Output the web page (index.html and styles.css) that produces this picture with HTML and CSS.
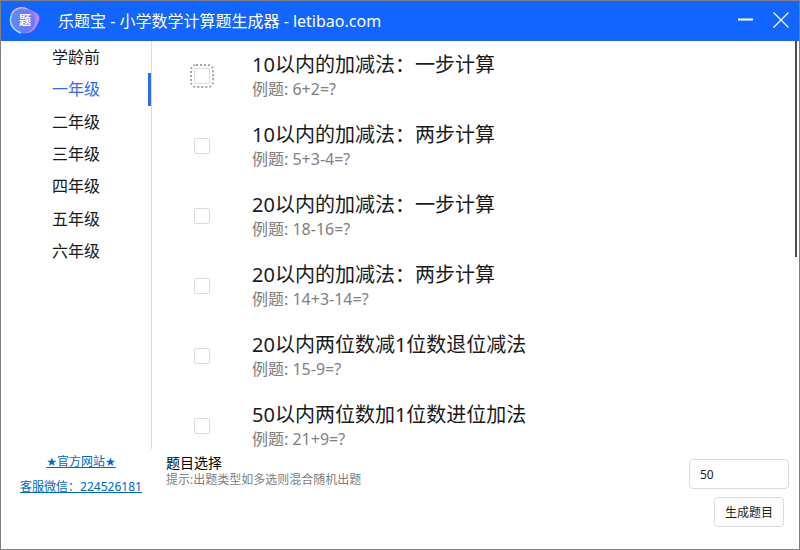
FILE: index.html
```html
<!DOCTYPE html>
<html lang="zh-CN">
<head>
<meta charset="utf-8">
<title>乐题宝 - 小学数学计算题生成器 - letibao.com</title>
<link rel="stylesheet" href="styles.css">
</head>
<body>
<div class="window">
  <header class="titlebar">
    <svg class="logo" viewBox="0 0 32 32" aria-hidden="true">
      <defs>
        <linearGradient id="rim" x1="0" y1="0.2" x2="1" y2="0.8">
          <stop offset="0" stop-color="#8ed4fa"/>
          <stop offset="0.5" stop-color="#8a86f0"/>
          <stop offset="1" stop-color="#f07fd8"/>
        </linearGradient>
        <linearGradient id="core" x1="0" y1="0" x2="1" y2="1">
          <stop offset="0" stop-color="#5b8df2"/>
          <stop offset="1" stop-color="#6f78f2"/>
        </linearGradient>
      </defs>
      <path d="M10 3C15 1 21 4 27 7C33 10 32 15 29 20C26 26 22 29 14 28C6 27 2 22 2 16C2 9 4 5 10 3Z" fill="url(#rim)"/>
      <path d="M9 4C15 1 21 4 25 9C29 15 27 22 22 26C17 30 9 28 5 23C1 17 3 8 9 4Z" fill="url(#core)"/>
      <path d="M4 9C6 4 12 1 19 4" fill="none" stroke="#f4a9cb" stroke-width="1.5"/>
      <path d="M3 11C1 18 5 25 13 28" fill="none" stroke="#9bdcf8" stroke-width="1.5"/>
      <text class="logo-text" x="17" y="20" text-anchor="middle">题</text>
    </svg>
    <h1 class="title">乐题宝 - 小学数学计算题生成器 - letibao.com</h1>
    <button class="winbtn" type="button" aria-label="最小化">
      <svg viewBox="0 0 16 18" aria-hidden="true"><path d="M0 7.5H15" stroke="#fff" stroke-width="2"/></svg>
    </button>
    <button class="winbtn" type="button" aria-label="关闭">
      <svg viewBox="0 0 16 18" aria-hidden="true"><path d="M0.5 0.5L15.5 15.5M15.5 0.5L0.5 15.5" stroke="#fff" stroke-width="1.2"/></svg>
    </button>
  </header>
  <div class="body">
    <div class="side">
      <nav class="grades">
        <button class="grade" type="button">学龄前</button>
        <button class="grade active" type="button">一年级</button>
        <button class="grade" type="button">二年级</button>
        <button class="grade" type="button">三年级</button>
        <button class="grade" type="button">四年级</button>
        <button class="grade" type="button">五年级</button>
        <button class="grade" type="button">六年级</button>
      </nav>
    </div>
    <main class="list">
      <label class="item"><input class="check focused" type="checkbox"><span class="texts"><span class="name">10以内的加减法：一步计算</span><span class="sample">例题: 6+2=?</span></span></label>
      <label class="item"><input class="check" type="checkbox"><span class="texts"><span class="name">10以内的加减法：两步计算</span><span class="sample">例题: 5+3-4=?</span></span></label>
      <label class="item"><input class="check" type="checkbox"><span class="texts"><span class="name">20以内的加减法：一步计算</span><span class="sample">例题: 18-16=?</span></span></label>
      <label class="item"><input class="check" type="checkbox"><span class="texts"><span class="name">20以内的加减法：两步计算</span><span class="sample">例题: 14+3-14=?</span></span></label>
      <label class="item"><input class="check" type="checkbox"><span class="texts"><span class="name">20以内两位数减1位数退位减法</span><span class="sample">例题: 15-9=?</span></span></label>
      <label class="item"><input class="check" type="checkbox"><span class="texts"><span class="name">50以内两位数加1位数进位加法</span><span class="sample">例题: 21+9=?</span></span></label>
    </main>
    <div class="scroll"><div class="thumb"></div></div>
  </div>
  <footer class="footer">
    <div class="links">
      <a href="#site"><span class="star">★</span>官方网站<span class="star">★</span></a>
      <a href="#wechat">客服微信：224526181</a>
    </div>
    <div class="hint">
      <label class="hint-title" for="count">题目选择</label>
      <span class="hint-text">提示:出题类型如多选则混合随机出题</span>
    </div>
    <div class="actions">
      <input class="count" id="count" type="text" value="50">
      <button class="generate" type="button">生成题目</button>
    </div>
  </footer>
</div>
</body>
</html>
```
FILE: styles.css
```css
* {
  box-sizing: border-box;
}

body {
  margin: 0;
  font-family: "Noto Sans", "Noto Sans CJK SC", sans-serif;
  color: #1a1a1a;
  background: #fff;
}

button,
input {
  margin: 0;
  font-family: inherit;
  color: inherit;
}

.window {
  display: flex;
  flex-direction: column;
  height: 100vh;
  border: 1px solid #808080;
}

.titlebar {
  display: flex;
  align-items: center;
  flex: none;
  height: 40px;
  padding: 0 10px 0 7px;
  background: #1266ff;
  color: #fff;
}

.logo {
  width: 32px;
  height: 32px;
}

.logo-text {
  font-size: 12px;
  font-weight: 700;
  fill: #fff;
}

.title {
  flex: 1;
  margin: 0 0 0 18px;
  font-size: 16px;
  font-weight: 400;
  line-height: 24px;
}

.winbtn {
  width: 16px;
  height: 18px;
  margin-left: 19px;
  padding: 0;
  border: 0;
  background: none;
}

.winbtn svg {
  display: block;
  width: 16px;
  height: 18px;
}

.body {
  display: flex;
  flex: 1;
  min-height: 0;
}

.side {
  flex: none;
  width: 151px;
  border-right: 1px solid #dcdcdc;
}

.grades {
  display: flex;
  flex-direction: column;
  height: 226px;
}

.grade {
  flex: 1;
  padding: 0 0 0 3px;
  border: 0;
  border-right: 3px solid transparent;
  background: none;
  font-size: 16px;
  line-height: 32px;
}

.grade.active {
  border-right-color: #2f6bf0;
  color: #2f6bf0;
}

.list {
  flex: 1;
  min-width: 0;
  overflow: hidden;
}

.item {
  display: flex;
  align-items: center;
  height: 70px;
  padding-left: 42px;
}

.check {
  flex: none;
  width: 16px;
  height: 16px;
  appearance: none;
  border: 1px solid #dcdcdc;
  border-radius: 2px;
  background: #fff;
}

.focused {
  outline: 2px dotted #a6a6a6;
  outline-offset: 2px;
}

.texts {
  display: flex;
  flex-direction: column;
  align-self: flex-start;
  margin-left: 42px;
  padding-top: 10px;
  white-space: nowrap;
}

.name {
  font-size: 20px;
  line-height: 28px;
}

.sample {
  font-size: 16px;
  line-height: 20px;
  color: #808080;
}

.scroll {
  flex: none;
  width: 4px;
}

.thumb {
  width: 2px;
  height: 53%;
  background: #4d4d4d;
}

.footer {
  display: flex;
  flex: none;
  height: 100px;
}

.links {
  display: flex;
  flex-direction: column;
  align-items: center;
  gap: 5px;
  flex: none;
  width: 160px;
  padding-top: 3px;
  font-size: 12px;
  line-height: 20px;
}

.links a {
  color: #0066cc;
}

.star {
  font-family: "DejaVu Sans", sans-serif;
}

.hint {
  display: flex;
  flex-direction: column;
  flex: 1;
  padding: 5px 0 0 5px;
}

.hint-title {
  font-size: 14px;
  line-height: 18px;
  color: #000;
}

.hint-text {
  font-size: 12px;
  line-height: 16px;
  color: #808080;
}

.actions {
  display: flex;
  flex-direction: column;
  align-items: flex-end;
  gap: 8px;
  padding: 10px 10px 0 0;
}

.count {
  width: 100px;
  height: 30px;
  padding: 0 10px;
  border: 1px solid #dcdcdc;
  border-radius: 4px;
  background: #fff;
  font-size: 12px;
}

.generate {
  height: 30px;
  margin-right: 5px;
  padding: 0 10px;
  border: 1px solid #dcdcdc;
  border-radius: 4px;
  background: #fff;
  font-size: 12px;
}
```
